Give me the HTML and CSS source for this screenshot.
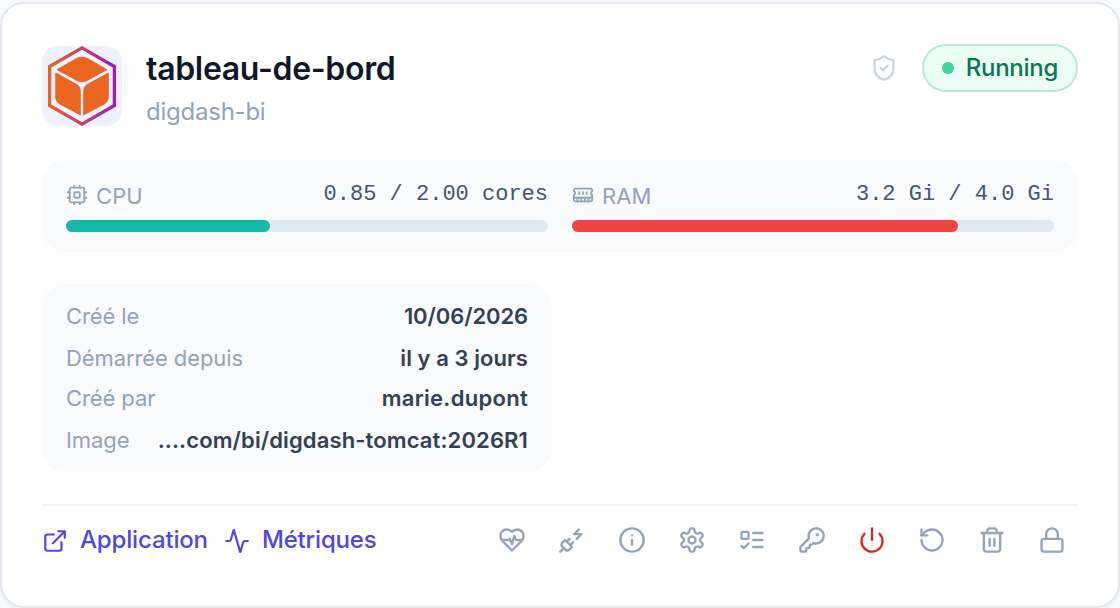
FILE: index.html
```html
<!DOCTYPE html>
<html lang="fr">
<head>
<meta charset="utf-8">
<title>tableau-de-bord</title>
<link rel="stylesheet" href="styles.css">
</head>
<body>
<article class="card">
  <header class="head">
    <svg class="logo" viewBox="0 0 80 80">
      <defs>
        <linearGradient id="edge" x1="0" y1="0" x2="1" y2="0">
          <stop offset="0" stop-color="#ea6321"/>
          <stop offset="1" stop-color="#a01ab8"/>
        </linearGradient>
      </defs>
      <path d="M40 1.9 72.4 20.5V59.5L40 78.1 7.6 59.5V20.5Z" fill="none" stroke="url(#edge)" stroke-width="3.3"/>
      <g fill="#ea6621">
        <path d="M15.3 23 34.5 12Q40 9.6 45.5 12L64.7 23Q65.5 23.6 64.7 24.2L44.5 35.2Q40 37.4 35.5 35.2L15.3 24.2Q14.5 23.6 15.3 23Z"/>
        <path d="M14.8 27 35 38.2Q38.8 40.8 38.8 45V68.4Q38.8 69.6 37.6 69L17.5 58.2Q13.2 55.6 13.2 51V27.8Q13.4 26.4 14.8 27Z"/>
        <path d="M65.2 27 45 38.2Q41.2 40.8 41.2 45V68.4Q41.2 69.6 42.4 69L62.5 58.2Q66.8 55.6 66.8 51V27.8Q66.6 26.4 65.2 27Z"/>
      </g>
    </svg>
    <div class="names">
      <h1 class="title">tableau-de-bord</h1>
      <p class="subtitle">digdash-bi</p>
    </div>
    <div class="state">
      <svg class="icon shield" viewBox="0 0 24 24"><path d="M20 13c0 5-3.5 7.5-7.66 8.95a1 1 0 0 1-.67-.01C7.5 20.5 4 18 4 13V6a1 1 0 0 1 1-1c2 0 4.5-1.2 6.24-2.72a1.17 1.17 0 0 1 1.52 0C14.51 3.81 17 5 19 5a1 1 0 0 1 1 1z"/><path d="m9 12 2 2 4-4"/></svg>
      <span class="pill"><i class="dot"></i><span class="pill-text">Running</span></span>
    </div>
  </header>

  <section class="usage">
    <div class="meter">
      <div class="meter-head">
        <span class="meter-label"><svg class="icon small" viewBox="0 0 24 24"><rect x="4" y="4" width="16" height="16" rx="2"/><rect x="9" y="9" width="6" height="6" rx="1"/><path d="M15 2v2M15 20v2M2 15h2M2 9h2M20 15h2M20 9h2M9 2v2M9 20v2"/></svg>CPU</span>
        <span class="meter-value">0.85 / 2.00 cores</span>
      </div>
      <div class="track"><div class="fill teal" style="width:42.4%"></div></div>
    </div>
    <div class="meter">
      <div class="meter-head">
        <span class="meter-label"><svg class="icon small" viewBox="0 0 24 24"><path d="M6 19v-3M10 19v-3M14 19v-3M18 19v-3M8 11V9M16 11V9M12 11V9M2 15h20"/><path d="M2 7a2 2 0 0 1 2-2h16a2 2 0 0 1 2 2v1.1a2 2 0 0 0 0 3.837V17a2 2 0 0 1-2 2H4a2 2 0 0 1-2-2v-5.1a2 2 0 0 0 0-3.837Z"/></svg>RAM</span>
        <span class="meter-value">3.2 Gi / 4.0 Gi</span>
      </div>
      <div class="track"><div class="fill red" style="width:80%"></div></div>
    </div>
  </section>

  <dl class="facts">
    <div class="fact"><dt>Créé le</dt><dd class="date">10/06/2026</dd></div>
    <div class="fact"><dt>Démarrée depuis</dt><dd>il y a 3 jours</dd></div>
    <div class="fact"><dt>Créé par</dt><dd class="user">marie.dupont</dd></div>
    <div class="fact"><dt>Image</dt><dd class="image">....com/bi/digdash-tomcat:2026R1</dd></div>
  </dl>

  <footer class="foot">
    <nav class="links">
      <a class="link"><svg class="icon medium" viewBox="0 0 24 24"><path d="M15 3h6v6M10 14 21 3M18 13v6a2 2 0 0 1-2 2H5a2 2 0 0 1-2-2V8a2 2 0 0 1 2-2h6"/></svg><span class="link-text">Application</span></a>
      <a class="link"><svg class="icon medium" viewBox="0 0 24 24"><path d="M22 12h-2.48a2 2 0 0 0-1.93 1.46l-2.35 8.36a.25.25 0 0 1-.48 0L9.24 2.18a.25.25 0 0 0-.48 0l-2.35 8.36A2 2 0 0 1 4.49 12H2"/></svg><span class="link-text">Métriques</span></a>
    </nav>
    <div class="actions">
      <button class="action"><svg class="icon" viewBox="0 0 24 24"><path d="M19 14c1.49-1.46 3-3.21 3-5.5A5.5 5.5 0 0 0 16.5 3c-1.76 0-3 .5-4.5 2-1.5-1.5-2.74-2-4.5-2A5.5 5.5 0 0 0 2 8.5c0 2.3 1.5 4.05 3 5.5l7 7Z"/><path d="M3.22 12H9.5l.5-1 2 4.5 2-7 1.5 3.5h5.27"/></svg></button>
      <button class="action"><svg class="icon" viewBox="0 0 24 24"><path d="M6.3 20.3a2.4 2.4 0 0 0 3.4 0L12 18l-6-6-2.3 2.3a2.4 2.4 0 0 0 0 3.4ZM2 22l3-3M7.5 13.5 10 11M10.5 16.5 13 14M18 3l-4 4h6l-4 4"/></svg></button>
      <button class="action"><svg class="icon" viewBox="0 0 24 24"><circle cx="12" cy="12" r="10"/><path d="M12 16v-4M12 8h.01"/></svg></button>
      <button class="action"><svg class="icon" viewBox="0 0 24 24"><path d="M12.22 2h-.44a2 2 0 0 0-2 2v.18a2 2 0 0 1-1 1.73l-.43.25a2 2 0 0 1-2 0l-.15-.08a2 2 0 0 0-2.73.73l-.22.38a2 2 0 0 0 .73 2.73l.15.1a2 2 0 0 1 1 1.72v.51a2 2 0 0 1-1 1.74l-.15.09a2 2 0 0 0-.73 2.73l.22.38a2 2 0 0 0 2.73.73l.15-.08a2 2 0 0 1 2 0l.43.25a2 2 0 0 1 1 1.73V20a2 2 0 0 0 2 2h.44a2 2 0 0 0 2-2v-.18a2 2 0 0 1 1-1.73l.43-.25a2 2 0 0 1 2 0l.15.08a2 2 0 0 0 2.73-.73l.22-.39a2 2 0 0 0-.73-2.73l-.15-.08a2 2 0 0 1-1-1.74v-.5a2 2 0 0 1 1-1.74l.15-.09a2 2 0 0 0 .73-2.73l-.22-.38a2 2 0 0 0-2.73-.73l-.15.08a2 2 0 0 1-2 0l-.43-.25a2 2 0 0 1-1-1.73V4a2 2 0 0 0-2-2z"/><circle cx="12" cy="12" r="3"/></svg></button>
      <button class="action"><svg class="icon" viewBox="0 0 24 24"><rect x="3" y="5" width="6" height="6" rx="1"/><path d="m3 17 2 2 4-4M13 6h8M13 12h8M13 18h8"/></svg></button>
      <button class="action"><svg class="icon" viewBox="0 0 24 24"><path d="M2.586 17.414A2 2 0 0 0 2 18.828V21a1 1 0 0 0 1 1h3a1 1 0 0 0 1-1v-1a1 1 0 0 1 1-1h1a1 1 0 0 0 1-1v-1a1 1 0 0 1 1-1h.172a2 2 0 0 0 1.414-.586l.814-.814a6.5 6.5 0 1 0-4-4z"/><circle cx="16.5" cy="7.5" r=".5" fill="currentColor"/></svg></button>
      <button class="action danger"><svg class="icon" viewBox="0 0 24 24"><path d="M12 2v10M18.4 6.6a9 9 0 1 1-12.77.04"/></svg></button>
      <button class="action"><svg class="icon" viewBox="0 0 24 24"><path d="M3 12a9 9 0 1 0 9-9 9.75 9.75 0 0 0-6.74 2.74L3 8"/><path d="M3 3v5h5"/></svg></button>
      <button class="action"><svg class="icon" viewBox="0 0 24 24"><path d="M3 6h18M19 6v14c0 1-1 2-2 2H7c-1 0-2-1-2-2V6M8 6V4c0-1 1-2 2-2h4c1 0 2 1 2 2v2M10 11v6M14 11v6"/></svg></button>
      <button class="action"><svg class="icon" viewBox="0 0 24 24"><rect x="3" y="11" width="18" height="11" rx="2"/><path d="M7 11V7a5 5 0 0 1 10 0v4"/></svg></button>
    </div>
  </footer>
</article>
</body>
</html>
```
FILE: styles.css
```css
* { box-sizing: border-box; }
body {
  margin: 0;
  height: 608px;
  padding-top: 2px;
  overflow: hidden;
  background: #f8fafc;
  font-family: Inter, "Liberation Sans", sans-serif;
  color: #0f172a;
}
.card {
  height: 606px;
  padding: 40px;
  background: #fff;
  border: 2px solid #e2e8f0;
  border-radius: 24px;
  box-shadow: 0 2px 4px rgba(0, 0, 0, .05);
}
.icon {
  display: block;
  flex: none;
  width: 28px;
  height: 28px;
  fill: none;
  stroke: currentColor;
  stroke-width: 2;
  stroke-linecap: round;
  stroke-linejoin: round;
}
.icon.small { width: 22px; height: 22px; }
.icon.medium { width: 26px; height: 26px; margin-top: 2px; }

.head { display: flex; height: 84px; }
.logo {
  flex: none;
  width: 80px;
  height: 80px;
  margin-top: 2px;
  border-radius: 16px;
  background: #eef2ff;
}
.names { flex: 1; margin-left: 24px; }
.title { margin: 3px 0 0; font-size: 32px; line-height: 44px; font-weight: 600; letter-spacing: -.01em; }
.subtitle { margin: 3px 0 0; font-size: 24px; line-height: 36px; color: #94a3b8; letter-spacing: -.24px; }
.state { display: flex; align-items: center; gap: 24px; height: 48px; }
.shield { color: #cbd5e1; }
.pill {
  display: flex;
  align-items: center;
  gap: 12px;
  height: 48px;
  padding: 0 18px;
  border: 2px solid #bbe9d7;
  border-radius: 24px;
  background: #ecfdf5;
  color: #047857;
  font-size: 24px;
  font-weight: 500;
  letter-spacing: -.28px;
}
.pill-text { padding-bottom: 2px; }
.dot { width: 12px; height: 12px; border-radius: 50%; background: #3dd598; }

.usage {
  display: grid;
  grid-template-columns: 1fr 1fr;
  gap: 24px;
  height: 92px;
  margin-top: 32px;
  padding: 20px 24px;
  border-radius: 24px;
  background: #f8fafc;
}
.meter-head { display: flex; justify-content: space-between; height: 32px; margin-bottom: 8px; }
.meter-label {
  display: flex;
  align-items: center;
  gap: 8px;
  height: 32px;
  font-size: 22px;
  letter-spacing: .1px;
  color: #94a3b8;
}
.meter-label .icon { margin-top: -2px; }
.meter-value {
  font-family: "Liberation Mono", monospace;
  font-size: 22px;
  line-height: 30px;
  color: #475569;
}
.track { height: 12px; border-radius: 6px; background: #e2e8f0; }
.fill { height: 12px; border-radius: 6px; }
.teal { background: #14b8a6; }
.red { background: #ef4444; }

.facts {
  display: flex;
  flex-direction: column;
  gap: 8px;
  width: 510px;
  height: 188px;
  margin: 32px 0 0;
  padding: 16px 24px;
  border-radius: 24px;
  background: #f8fafc;
}
.fact { display: flex; justify-content: space-between; font-size: 22px; line-height: 33px; }
.fact:nth-child(even) { line-height: 35px; margin-bottom: -2px; }
.fact dt { color: #94a3b8; letter-spacing: -.1px; }
.fact dd { margin: 0; font-weight: 600; letter-spacing: .07px; color: #334155; }
.fact .date { letter-spacing: -.1px; }
.fact .user { letter-spacing: .3px; }
.fact .image { letter-spacing: .12px; }

.foot {
  display: flex;
  align-items: center;
  justify-content: space-between;
  margin-top: 32px;
  padding-top: 8px;
  border-top: 2px solid #f1f5f9;
}
.links { display: flex; gap: 16px; }
.link {
  display: flex;
  align-items: center;
  gap: 12px;
  font-size: 24px;
  font-weight: 500;
  letter-spacing: -.16px;
  color: #4f46e5;
}
.link-text { padding-bottom: 1px; }
.actions { display: flex; gap: 8px; }
.action {
  display: flex;
  align-items: center;
  justify-content: center;
  width: 52px;
  height: 52px;
  padding: 0;
  border: 0;
  background: none;
  color: #94a3b8;
}
.danger { color: #dc2626; }
```
